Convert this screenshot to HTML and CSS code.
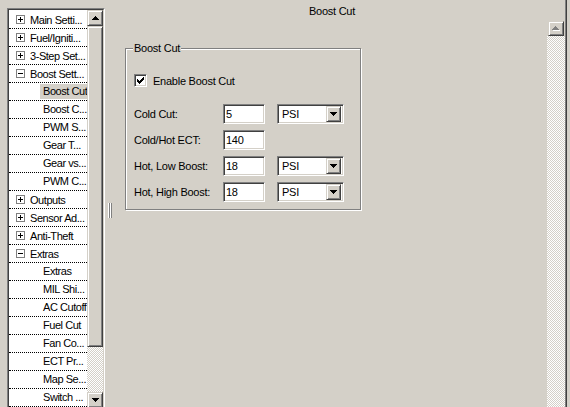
FILE: index.html
```html
<!DOCTYPE html>
<html>
<head>
<meta charset="utf-8">
<link rel="stylesheet" href="styles.css">
</head>
<body>
<div class="app">
  <div class="tree">
    <div class="tree-inner">
      <div class="items">
        <div class="row parent"><span class="exp plus"></span><span class="lbl">Main Setti...</span></div>
        <div class="row parent"><span class="exp plus"></span><span class="lbl">Fuel/Igniti...</span></div>
        <div class="row parent"><span class="exp plus"></span><span class="lbl">3-Step Set...</span></div>
        <div class="row parent"><span class="exp minus"></span><span class="lbl">Boost Sett...</span></div>
        <div class="row child"><span class="lbl sel">Boost Cut</span></div>
        <div class="row child"><span class="lbl">Boost C...</span></div>
        <div class="row child"><span class="lbl">PWM S...</span></div>
        <div class="row child"><span class="lbl">Gear T...</span></div>
        <div class="row child"><span class="lbl">Gear vs...</span></div>
        <div class="row child"><span class="lbl">PWM C...</span></div>
        <div class="row parent"><span class="exp plus"></span><span class="lbl">Outputs</span></div>
        <div class="row parent"><span class="exp plus"></span><span class="lbl">Sensor Ad...</span></div>
        <div class="row parent"><span class="exp plus"></span><span class="lbl">Anti-Theft</span></div>
        <div class="row parent"><span class="exp minus"></span><span class="lbl">Extras</span></div>
        <div class="row child"><span class="lbl">Extras</span></div>
        <div class="row child"><span class="lbl">MIL Shi...</span></div>
        <div class="row child"><span class="lbl">AC Cutoff</span></div>
        <div class="row child"><span class="lbl">Fuel Cut</span></div>
        <div class="row child"><span class="lbl">Fan Co...</span></div>
        <div class="row child"><span class="lbl">ECT Pr...</span></div>
        <div class="row child"><span class="lbl">Map Se...</span></div>
        <div class="row child"><span class="lbl">Switch ...</span></div>
      </div>
      <div class="vscroll">
        <div class="sbtn"><svg class="tri" width="7" height="4" viewBox="0 0 7 4" shape-rendering="crispEdges"><rect x="3" y="0" width="1" height="1"/><rect x="2" y="1" width="3" height="1"/><rect x="1" y="2" width="5" height="1"/><rect x="0" y="3" width="7" height="1"/></svg></div>
        <div class="thumb"></div>
        <div class="track"></div>
        <div class="sbtn"><svg class="tri" width="7" height="4" viewBox="0 0 7 4" shape-rendering="crispEdges"><rect x="0" y="0" width="7" height="1"/><rect x="1" y="1" width="5" height="1"/><rect x="2" y="2" width="3" height="1"/><rect x="3" y="3" width="1" height="1"/></svg></div>
      </div>
    </div>
  </div>

  <div class="splitter"><div class="grip"></div></div>

  <div class="pane">
    <div class="title">Boost Cut</div>
    <div class="group">
      <div class="legend">Boost Cut</div>
      <div class="check">
        <span class="cbox"><svg class="mark" width="7" height="7" viewBox="0 0 7 7" shape-rendering="crispEdges"><rect x="6" y="0" width="1" height="1"/><rect x="5" y="1" width="2" height="1"/><rect x="0" y="2" width="1" height="1"/><rect x="4" y="2" width="3" height="1"/><rect x="0" y="3" width="2" height="1"/><rect x="3" y="3" width="3" height="1"/><rect x="0" y="4" width="5" height="1"/><rect x="1" y="5" width="3" height="1"/><rect x="2" y="6" width="1" height="1"/></svg></span>
        <span>Enable Boost Cut</span>
      </div>
      <div class="form">
        <div class="flabel">Cold Cut:</div>
        <div class="field">5</div>
        <div class="combo"><span>PSI</span><span class="dbtn"><svg class="tri" width="7" height="4" viewBox="0 0 7 4" shape-rendering="crispEdges"><rect x="0" y="0" width="7" height="1"/><rect x="1" y="1" width="5" height="1"/><rect x="2" y="2" width="3" height="1"/><rect x="3" y="3" width="1" height="1"/></svg></span></div>

        <div class="flabel">Cold/Hot ECT:</div>
        <div class="field">140</div>
        <div></div>

        <div class="flabel">Hot, Low Boost:</div>
        <div class="field">18</div>
        <div class="combo"><span>PSI</span><span class="dbtn"><svg class="tri" width="7" height="4" viewBox="0 0 7 4" shape-rendering="crispEdges"><rect x="0" y="0" width="7" height="1"/><rect x="1" y="1" width="5" height="1"/><rect x="2" y="2" width="3" height="1"/><rect x="3" y="3" width="1" height="1"/></svg></span></div>

        <div class="flabel">Hot, High Boost:</div>
        <div class="field">18</div>
        <div class="combo"><span>PSI</span><span class="dbtn"><svg class="tri" width="7" height="4" viewBox="0 0 7 4" shape-rendering="crispEdges"><rect x="0" y="0" width="7" height="1"/><rect x="1" y="1" width="5" height="1"/><rect x="2" y="2" width="3" height="1"/><rect x="3" y="3" width="1" height="1"/></svg></span></div>
      </div>
    </div>
  </div>

  <div class="rscroll">
    <div class="sbtn small"><svg width="8" height="5" viewBox="0 0 8 5" shape-rendering="crispEdges"><g fill="#fff"><rect x="4" y="1" width="1" height="1"/><rect x="3" y="2" width="3" height="1"/><rect x="2" y="3" width="5" height="1"/><rect x="1" y="4" width="7" height="1"/></g><g fill="#808080"><rect x="3" y="0" width="1" height="1"/><rect x="2" y="1" width="3" height="1"/><rect x="1" y="2" width="5" height="1"/><rect x="0" y="3" width="7" height="1"/></g></svg></div>
    <div class="track"></div>
  </div>
  <div class="edge"></div>
</div>
</body>
</html>
```
FILE: styles.css
```css
html, body {
  margin: 0;
  padding: 0;
}
body {
  background: #d4d0c8;
  font-family: "Liberation Sans", Arial, sans-serif;
  font-size: 11px;
  letter-spacing: -0.25px;
  color: #000;
  overflow: hidden;
}
.app {
  display: flex;
  width: 570px;
  height: 407px;
  overflow: hidden;
}

/* tree */
.tree {
  flex: none;
  width: 98px;
  height: 402px;
  margin: 8px 0 0 7px;
  box-sizing: border-box;
  border: 1px solid;
  border-color: #808080 #fff #fff #808080;
}
.tree-inner {
  height: 100%;
  box-sizing: border-box;
  border: 1px solid;
  border-color: #404040 #d4d0c8 #d4d0c8 #404040;
  display: flex;
}
.items {
  flex: none;
  width: 78px;
  background: #fff;
  padding-top: 1px;
  overflow: hidden;
  letter-spacing: -0.45px;
}
.row {
  height: 18px;
  box-sizing: border-box;
  border-bottom: 1px dotted #000;
  display: flex;
  align-items: center;
  white-space: nowrap;
  overflow: hidden;
}
.row.parent { padding-left: 7px; }
.row.child { padding-left: 31px; }
.row.child .lbl { padding: 0 3px; line-height: 15px; }
.lbl.sel { background: #d4d0c8; }
.exp {
  flex: none;
  position: relative;
  width: 9px;
  height: 9px;
  box-sizing: border-box;
  border: 1px solid #808080;
  background: #fff;
  margin-right: 5px;
}
.exp::before {
  content: "";
  position: absolute;
  left: 1px;
  top: 3px;
  width: 5px;
  height: 1px;
  background: #000;
}
.exp.plus::after {
  content: "";
  position: absolute;
  left: 3px;
  top: 1px;
  width: 1px;
  height: 5px;
  background: #000;
}

/* scrollbars */
.vscroll {
  flex: none;
  width: 16px;
  display: flex;
  flex-direction: column;
}
.sbtn, .thumb, .dbtn {
  flex: none;
  box-sizing: border-box;
  background: #d4d0c8;
  border: 1px solid;
  border-color: #d4d0c8 #404040 #404040 #d4d0c8;
  box-shadow: inset 1px 1px #fff, inset -1px -1px #808080;
}
.sbtn {
  width: 16px;
  height: 16px;
  display: flex;
  align-items: center;
  justify-content: center;
}
.tri { display: block; fill: #000; }
.thumb { height: 321px; }
.track {
  flex: 1;
  background-image: conic-gradient(#d4d0c8 25%, #fff 0 50%, #d4d0c8 0 75%, #fff 0);
  background-size: 2px 2px;
}

/* splitter */
.splitter {
  flex: none;
  width: 7px;
  box-sizing: border-box;
  padding-left: 3px;
  display: flex;
  align-items: center;
}
.grip {
  width: 4px;
  height: 15px;
  margin-top: 14px;
  background: linear-gradient(to right, #fff 0 1px, #808080 1px 2px, #fff 2px 3px, #808080 3px 4px);
}

/* pane */
.pane {
  flex: 1;
  min-width: 0;
}
.title {
  text-align: center;
  padding: 4px 0 0 5px;
  line-height: 14px;
}
.group {
  position: relative;
  width: 236px;
  margin: 30px 0 0 13px;
  box-sizing: border-box;
  border: 1px solid #808080;
  box-shadow: inset 1px 1px #fff, 1px 1px #fff;
  padding: 25px 8px 7px;
}
.legend {
  position: absolute;
  left: 7px;
  top: -8px;
  padding: 0 1px;
  line-height: 14px;
  background: #d4d0c8;
}
.check {
  display: flex;
  align-items: center;
  gap: 6px;
  height: 13px;
}
.cbox, .field, .combo {
  box-sizing: border-box;
  border: 1px solid;
  border-color: #808080 #fff #fff #808080;
  box-shadow: inset 1px 1px #404040, inset -1px -1px #d4d0c8;
  background: #fff;
}
.cbox {
  flex: none;
  width: 13px;
  height: 13px;
}
.mark {
  display: block;
  margin: 2px;
  fill: #000;
}
.form {
  margin-top: 17px;
  display: grid;
  grid-template-columns: 89px 42px 79px;
  grid-auto-rows: 20px;
  row-gap: 6px;
}
.flabel {
  display: flex;
  align-items: center;
  white-space: nowrap;
}
.field {
  display: flex;
  align-items: center;
  padding-left: 2px;
}
.combo {
  margin-left: 12px;
  width: 67px;
  display: flex;
  align-items: center;
  justify-content: space-between;
  padding: 2px 2px 2px 4px;
}
.dbtn {
  width: 15px;
  height: 16px;
  display: flex;
  align-items: center;
  justify-content: center;
}

/* right scrollbar */
.rscroll {
  flex: none;
  width: 18px;
  margin-top: 21px;
  display: flex;
  flex-direction: column;
}
.rscroll .sbtn {
  margin-left: 1px;
  height: 15px;
}
.rscroll .sbtn svg { display: block; }
.edge {
  flex: none;
  width: 5px;
  box-sizing: border-box;
  border-left: 1px solid #808080;
  box-shadow: inset 1px 0 #404040;
}
```
